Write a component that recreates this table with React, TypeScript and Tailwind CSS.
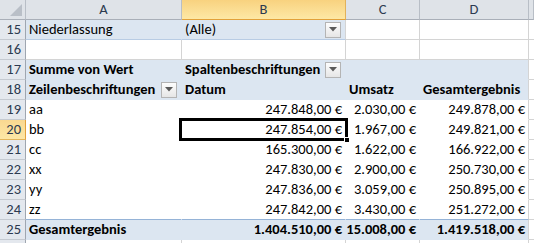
import React from "react"

const FONT = { fontFamily: 'Calibri, Carlito, Lato, "Liberation Sans", sans-serif' }

// column widths incl. the right grid line: row header, A, B, C, D, E
const W = ["w-[26px]", "w-[156px]", "w-[164px]", "w-[74px]", "w-[109px]", "flex-1"]

const Drop = () => (
  <span className="ml-auto mr-[1px] flex h-[16px] w-[16px] shrink-0 items-center justify-center border border-[#b4b4b4] bg-gradient-to-b from-[#fdfdfd] to-[#e6e6e6]">
    <svg width="8" height="5" viewBox="0 0 8 5">
      <path d="M0 0H8L4 4.5Z" fill="#5a5a5a" />
    </svg>
  </span>
)

type CellProps = {
  col: number
  children?: React.ReactNode
  right?: boolean
  bold?: boolean
  cls?: string
}

// one sheet cell; cls carries background + border colours
const Cell = ({ col, children, right, bold, cls = "bg-white border-r-[#d4d4d4] border-b-[#d4d4d4]" }: CellProps) => (
  <div
    className={`${W[col]} flex h-full shrink-0 items-center overflow-visible whitespace-nowrap border-r border-b px-[3px] text-[14.5px] leading-none text-black ${
      right ? "justify-end" : ""
    } ${bold ? "font-bold" : ""} ${cls}`}
  >
    {children}
  </div>
)

const RowHead = ({ n, active }: { n?: number; active?: boolean }) => (
  <div
    className={`${W[0]} flex h-full shrink-0 items-center justify-end border-b border-r pr-[4px] text-[14.5px] leading-none ${
      active
        ? "border-b-[#e3b55c] border-r-[#e3a13b] bg-gradient-to-b from-[#f9d890] to-[#fde7a6] text-[#2c3a50]"
        : "border-b-[#c5cad1] border-r-[#9fa6b0] bg-[#e4e8ee] text-[#2c3a50]"
    }`}
  >
    {n}
  </div>
)

const Row = ({ children }: { children: React.ReactNode }) => <div className="flex h-[20px]">{children}</div>

const GRID = "bg-white border-r-[#d4d4d4] border-b-[#d4d4d4]"
const BLUE = "bg-[#dce6f1] border-r-[#dce6f1] border-b-[#dce6f1]"
const BLUE_END = "bg-[#dce6f1] border-r-[#d4d4d4] border-b-[#dce6f1]"
const PLAIN = "bg-white border-r-white border-b-white"
const PLAIN_END = "bg-white border-r-[#d4d4d4] border-b-white"

const data = [
  ["aa", "247.848,00 €", "2.030,00 €", "249.878,00 €"],
  ["bb", "247.854,00 €", "1.967,00 €", "249.821,00 €"],
  ["cc", "165.300,00 €", "1.622,00 €", "166.922,00 €"],
  ["xx", "247.830,00 €", "2.900,00 €", "250.730,00 €"],
  ["yy", "247.836,00 €", "3.059,00 €", "250.895,00 €"],
  ["zz", "247.842,00 €", "3.430,00 €", "251.272,00 €"],
]

export default function App() {
  return (
    <div className="h-[243px] w-[534px] overflow-hidden bg-white" style={FONT}>
      {/* column letters */}
      <div className="flex h-[20px]">
        <div className={`${W[0]} relative shrink-0 border-b border-r border-b-[#a9afb8] border-r-[#b8bec6] bg-[#dfe3e8]`}>
          <svg className="absolute bottom-[3px] right-[3px]" width="12" height="12" viewBox="0 0 12 12">
            <path d="M12 0V12H0Z" fill="#b9bfc7" />
          </svg>
        </div>
        {["A", "B", "C", "D", ""].map((l, i) => (
          <div
            key={i}
            className={`${W[i + 1]} flex shrink-0 items-center justify-center border-b border-r text-[14.5px] leading-none text-[#2c3a50] ${
              l === "B"
                ? "border-b-[#e2a13a] border-r-[#e2b25a] bg-gradient-to-b from-[#f8d27f] to-[#fde8a5]"
                : "border-b-[#a9afb8] border-r-[#b8bec6] bg-[#dfe3e8]"
            }`}
          >
            {l}
          </div>
        ))}
      </div>

      <Row>
        <RowHead n={15} />
        <Cell col={1} cls="bg-[#dce6f1] border-r-[#dce6f1] border-b-[#b8cce4]">Niederlassung</Cell>
        <Cell col={2} cls="bg-[#dce6f1] border-r-[#d4d4d4] border-b-[#b8cce4]">
          (Alle)
          <Drop />
        </Cell>
        <Cell col={3} />
        <Cell col={4} />
        <Cell col={5} />
      </Row>

      <Row>
        <RowHead n={16} />
        <Cell col={1} />
        <Cell col={2} />
        <Cell col={3} />
        <Cell col={4} />
        <Cell col={5} />
      </Row>

      <Row>
        <RowHead n={17} />
        <Cell col={1} bold cls={BLUE}>Summe von Wert</Cell>
        <Cell col={2} bold cls={BLUE}>
          Spaltenbeschriftungen
          <span className="ml-[5px] flex">
            <Drop />
          </span>
        </Cell>
        <Cell col={3} cls={BLUE} />
        <Cell col={4} cls={BLUE_END} />
        <Cell col={5} cls={GRID} />
      </Row>

      <Row>
        <RowHead n={18} />
        <Cell col={1} bold cls={BLUE}>
          Zeilenbeschriftungen
          <Drop />
        </Cell>
        <Cell col={2} bold cls={BLUE}>Datum</Cell>
        <Cell col={3} bold cls={BLUE}>Umsatz</Cell>
        <Cell col={4} bold cls={BLUE_END}>Gesamtergebnis</Cell>
        <Cell col={5} cls={GRID} />
      </Row>

      {data.map((r, i) => (
        <Row key={r[0]}>
          <RowHead n={19 + i} active={i === 1} />
          <Cell col={1} cls={i === 5 ? "bg-white border-r-white border-b-[#95b3d7]" : PLAIN}>{r[0]}</Cell>
          <Cell col={2} right cls={i === 5 ? "bg-white border-r-white border-b-[#95b3d7]" : PLAIN}>
            <span className="relative">
              {r[1]}
              {i === 1 && (
                <span className="pointer-events-none absolute -top-[4px] -bottom-[4px] -right-[6px] w-[169px] border-[3px] border-black">
                  <span className="absolute -bottom-[5px] -right-[5px] h-[6px] w-[6px] border border-white bg-black" />
                </span>
              )}
            </span>
          </Cell>
          <Cell col={3} right cls={i === 5 ? "bg-white border-r-white border-b-[#95b3d7]" : PLAIN}>{r[2]}</Cell>
          <Cell col={4} right cls={i === 5 ? "bg-white border-r-[#d4d4d4] border-b-[#95b3d7]" : PLAIN_END}>{r[3]}</Cell>
          <Cell col={5} cls={GRID} />
        </Row>
      ))}

      <Row>
        <RowHead n={25} />
        <Cell col={1} bold cls={BLUE}>Gesamtergebnis</Cell>
        <Cell col={2} bold right cls={BLUE}>1.404.510,00 €</Cell>
        <Cell col={3} bold right cls={BLUE}>15.008,00 €</Cell>
        <Cell col={4} bold right cls={BLUE_END}>1.419.518,00 €</Cell>
        <Cell col={5} cls={GRID} />
      </Row>

      {/* next row, only its top edge is on screen */}
      <Row>
        <RowHead />
        <Cell col={1} />
        <Cell col={2} />
        <Cell col={3} />
        <Cell col={4} />
        <Cell col={5} />
      </Row>
    </div>
  )
}
